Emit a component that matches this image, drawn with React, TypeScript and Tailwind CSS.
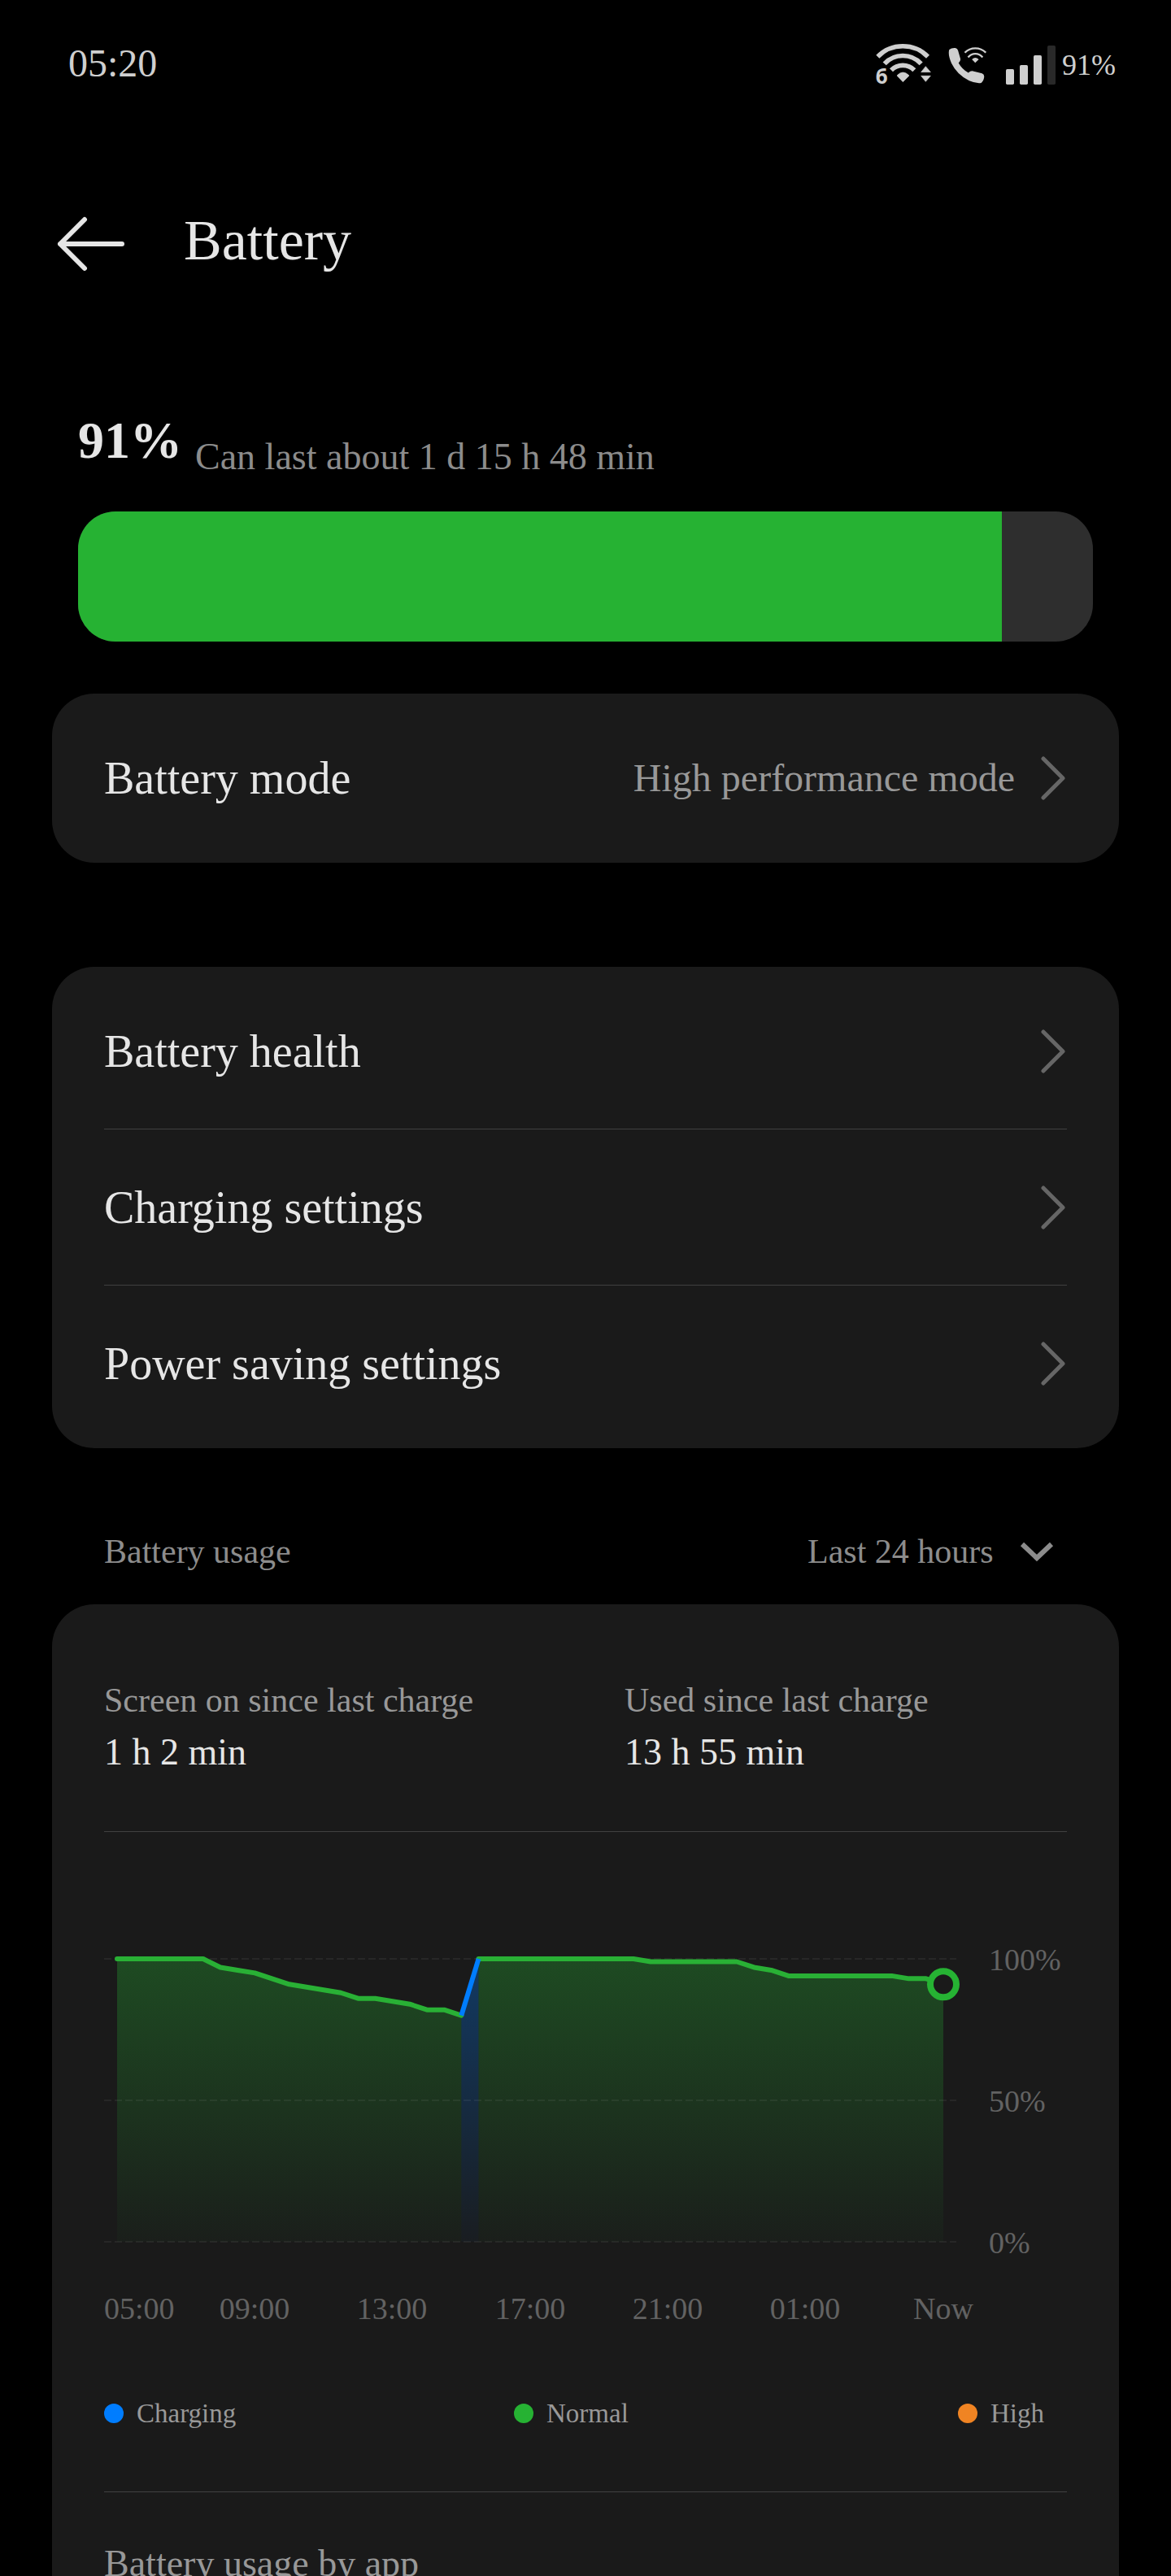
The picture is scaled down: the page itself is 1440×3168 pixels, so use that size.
import { useId } from "react"

// Battery level in percent, one sample every half hour
const LEVELS = [
  100, 100, 100, 100, 100, 100, 97, 96, 95, 93, 91, 90, 89, 88, 86, 86, 85, 84, 82, 82, 80, 100, 100, 100, 100, 100, 100,
  100, 100, 100, 100, 99, 99, 99, 99, 99, 99, 97, 96, 94, 94, 94, 94, 94, 94, 94, 93, 93, 91,
]
const CHARGE_START = 20
const CHARGE_END = 21

const CHART = { left: 16, right: 1032, top: 156, bottom: 504 }

const TIMES = [
  { label: "05:00", x: 0, anchor: "start" as const },
  { label: "09:00", x: 185, anchor: "middle" as const },
  { label: "13:00", x: 354, anchor: "middle" as const },
  { label: "17:00", x: 524, anchor: "middle" as const },
  { label: "21:00", x: 693, anchor: "middle" as const },
  { label: "01:00", x: 862, anchor: "middle" as const },
  { label: "Now", x: 1032, anchor: "middle" as const },
]

const LEGEND = [
  { label: "Charging", dot: "bg-[#007dff]" },
  { label: "Normal", dot: "bg-[#26b233]" },
  { label: "High", dot: "bg-[#f08423]" },
]

function WifiIcon() {
  return (
    <svg viewBox="104 78 213 162" className="w-[71px] h-[54px]" fill="none" stroke="#cfcfcf" aria-hidden="true">
      <g strokeWidth="17">
        <path d="M117 128A130 130 0 0 1 302 128" />
        <path d="M142 154A92 92 0 0 1 277 154" />
        <path d="M167 178A60 60 0 0 1 252 178" />
      </g>
      <g fill="#cfcfcf" stroke="#cfcfcf" strokeWidth="2" strokeLinejoin="round">
        <path d="M188 198Q210 174 233 198L210 221Z" />
        <path d="M294 164L277 185H312Z" />
        <path d="M277 199H312L294 220Z" />
      </g>
      <text x="109" y="227" fill="#cfcfcf" stroke="none" className="font-['Open_Sans',sans-serif] text-[78px] font-bold">
        6
      </text>
    </svg>
  )
}

function CallIcon() {
  return (
    <svg viewBox="378 84 140 134" className="w-[47px] h-[45px]" fill="none" stroke="#cfcfcf" aria-hidden="true">
      <path
        d="M382 93Q390 86 404 87Q412 88 414 96L423 127Q424 135 416 142Q428 164 452 178Q458 171 466 171L502 180Q510 183 510 192Q508 208 499 215Q480 218 455 207Q410 185 390 143Q376 110 382 93Z"
        fill="#cfcfcf"
        stroke="none"
      />
      <path d="M439 104A54 54 0 0 1 516 104" strokeWidth="7" />
      <path d="M451 121A34 34 0 0 1 504 121" strokeWidth="7" />
      <path d="M465 129Q477 117 490 129L477 141Z" fill="#cfcfcf" stroke="none" />
    </svg>
  )
}

function SignalIcon() {
  return (
    <svg viewBox="585 78 183 144" className="w-[61px] h-[48px]" fill="#cfcfcf" aria-hidden="true">
      <rect x="585" y="165" width="30" height="57" rx="5" />
      <rect x="636" y="150" width="30" height="72" rx="5" />
      <rect x="687" y="114" width="30" height="108" rx="5" />
      <rect x="738" y="78" width="30" height="144" rx="5" fill="#292929" />
    </svg>
  )
}

function ChevronRight() {
  return (
    <svg viewBox="0 0 32 56" className="w-8 h-14 shrink-0" fill="none" stroke="#666" strokeWidth="5" strokeLinecap="round" strokeLinejoin="round" aria-hidden="true">
      <path d="M3 4L27 28L3 52" />
    </svg>
  )
}

function SettingRow({ title, value }: { title: string; value?: string }) {
  return (
    <button type="button" className="flex h-48 w-full items-center text-left">
      <span className="flex-1 text-[56px] leading-[64px]">{title}</span>
      {value && <span className="mr-8 text-[48px] leading-[56px] text-[#989898]">{value}</span>}
      <ChevronRight />
    </button>
  )
}

function Stat({ label, value }: { label: string; value: string }) {
  return (
    <div className="flex flex-col gap-2">
      <dt className="text-[42px] leading-[56px] text-[#989898]">{label}</dt>
      <dd className="text-[46px] leading-[56px]">{value}</dd>
    </div>
  )
}

function UsageChart() {
  const id = useId()
  const { left, right, top, bottom } = CHART
  const step = (right - left) / (LEVELS.length - 1)
  const points = LEVELS.map((level, i) => `${left + i * step},${bottom - ((bottom - top) * level) / 100}`)
  const xAt = (i: number) => left + i * step

  const before = points.slice(0, CHARGE_START + 1).join(" ")
  const charging = points.slice(CHARGE_START, CHARGE_END + 1).join(" ")
  const after = points.slice(CHARGE_END).join(" ")
  const [nowX, nowY] = points[points.length - 1].split(",")

  return (
    <svg viewBox="0 0 1184 620" className="block w-full" fill="none" role="img" aria-label="Battery level">
      <defs>
        <linearGradient id={`${id}-green`} gradientUnits="userSpaceOnUse" x1="0" y1={top} x2="0" y2={bottom}>
          <stop offset="0" stopColor="#26b233" stopOpacity="0.32" />
          <stop offset="1" stopColor="#26b233" stopOpacity="0.03" />
        </linearGradient>
        <linearGradient id={`${id}-blue`} gradientUnits="userSpaceOnUse" x1="0" y1={top} x2="0" y2={bottom}>
          <stop offset="0" stopColor="#007dff" stopOpacity="0.32" />
          <stop offset="1" stopColor="#007dff" stopOpacity="0.03" />
        </linearGradient>
      </defs>

      <polygon points={`${left},${bottom} ${before} ${xAt(CHARGE_START)},${bottom}`} fill={`url(#${id}-green)`} />
      <polygon points={`${xAt(CHARGE_START)},${bottom} ${charging} ${xAt(CHARGE_END)},${bottom}`} fill={`url(#${id}-blue)`} />
      <polygon points={`${xAt(CHARGE_END)},${bottom} ${after} ${right},${bottom}`} fill={`url(#${id}-green)`} />

      {[100, 50, 0].map((level) => {
        const y = bottom - ((bottom - top) * level) / 100
        return (
          <g key={level}>
            <line x1="0" x2="1048" y1={y} y2={y} stroke="#fff" strokeOpacity="0.06" strokeWidth="2" strokeDasharray="9 4" />
            <text x="1088" y={y + 14} fill="#626262" className="text-[38px]">
              {level}%
            </text>
          </g>
        )
      })}

      <g strokeWidth="6" strokeLinecap="round" strokeLinejoin="round">
        <polyline points={before} stroke="#29b035" />
        <polyline points={after} stroke="#29b035" />
        <polyline points={charging} stroke="#007dff" strokeLinecap="butt" />
      </g>
      <circle cx={nowX} cy={nowY} r="16" fill="#1a1a1a" stroke="#26b233" strokeWidth="8" />

      {TIMES.map((time) => (
        <text key={time.label} x={time.x} y="599" textAnchor={time.anchor} fill="#626262" className="text-[38px]">
          {time.label}
        </text>
      ))}
    </svg>
  )
}

export default function App() {
  return (
    <div className="h-screen overflow-hidden bg-black font-['Liberation_Serif',serif] text-[#e6e6e6]">
      <div className="flex h-40 items-center justify-between pr-[68px] pl-[84px] text-[#cfcfcf]">
        <span className="pb-1 text-[48px] leading-[56px]">05:20</span>
        <div className="flex items-center">
          <WifiIcon />
          <span className="w-5" />
          <CallIcon />
          <span className="w-6" />
          <SignalIcon />
          <span className="ml-2 text-[36px] leading-[56px]">91%</span>
        </div>
      </div>

      <header className="mt-[68px] flex h-36 items-center gap-[72px] px-[70px]">
        <button type="button" aria-label="Back">
          <svg viewBox="0 0 84 68" className="block w-[84px] h-[68px]" fill="none" stroke="#e6e6e6" strokeWidth="6" strokeLinecap="round" strokeLinejoin="round" aria-hidden="true">
            <path d="M34 4L4 34L34 64M4 34H80" />
          </svg>
        </button>
        <h1 className="pb-2 text-[70px] leading-[80px]">Battery</h1>
      </header>

      <main className="px-16">
        <section className="px-8 pt-[138px]">
          <div className="flex items-end gap-4">
            <span className="pb-4 text-[64px] leading-[64px] font-bold">91%</span>
            <span className="text-[46px] leading-[56px] text-[#8c8c8c]">Can last about 1 d 15 h 48 min</span>
          </div>
          <div className="mt-[39px] h-40 overflow-hidden rounded-[46px] bg-[#2e2e2e]">
            <div className="h-full w-[91%] bg-[#26b233]" />
          </div>
        </section>

        <section className="mt-16 rounded-[52px] bg-[#1a1a1a] px-16 py-2">
          <SettingRow title="Battery mode" value="High performance mode" />
        </section>

        <section className="mt-32 divide-y divide-[#404040] rounded-[52px] bg-[#1a1a1a] px-16 py-2">
          <SettingRow title="Battery health" />
          <SettingRow title="Charging settings" />
          <SettingRow title="Power saving settings" />
        </section>

        <div className="flex items-center justify-between px-16 pt-[99px] pb-[37px] text-[42px] leading-[56px] text-[#8c8c8c]">
          <h2>Battery usage</h2>
          <div className="flex items-center gap-8 pr-4">
            <select aria-label="Usage period" className="h-14 appearance-none bg-transparent">
              <option>Last 24 hours</option>
            </select>
            <svg viewBox="0 0 42 26" className="pointer-events-none w-[42px] h-[26px]" fill="none" stroke="#8c8c8c" strokeWidth="6" aria-hidden="true">
              <path d="M3 4L21 21L39 4" />
            </svg>
          </div>
        </div>

        <section className="rounded-t-[52px] bg-[#1a1a1a] px-16 pt-[90px]">
          <dl className="grid grid-cols-2 gap-24 border-b border-[#404040] pb-[69px]">
            <Stat label="Screen on since last charge" value="1 h 2 min" />
            <Stat label="Used since last charge" value="13 h 55 min" />
          </dl>

          <UsageChart />

          <ul className="grid grid-cols-[504fr_546fr_134fr] border-b border-[#404040] pt-[71px] pb-[72px] text-[33px] leading-[48px] text-[#989898]">
            {LEGEND.map((item) => (
              <li key={item.label} className="flex items-center gap-4">
                <span className={`size-6 shrink-0 rounded-full ${item.dot}`} />
                {item.label}
              </li>
            ))}
          </ul>

          <h2 className="pt-[60px] text-[46px] leading-[56px] text-[#989898]">Battery usage by app</h2>
        </section>
      </main>
    </div>
  )
}
